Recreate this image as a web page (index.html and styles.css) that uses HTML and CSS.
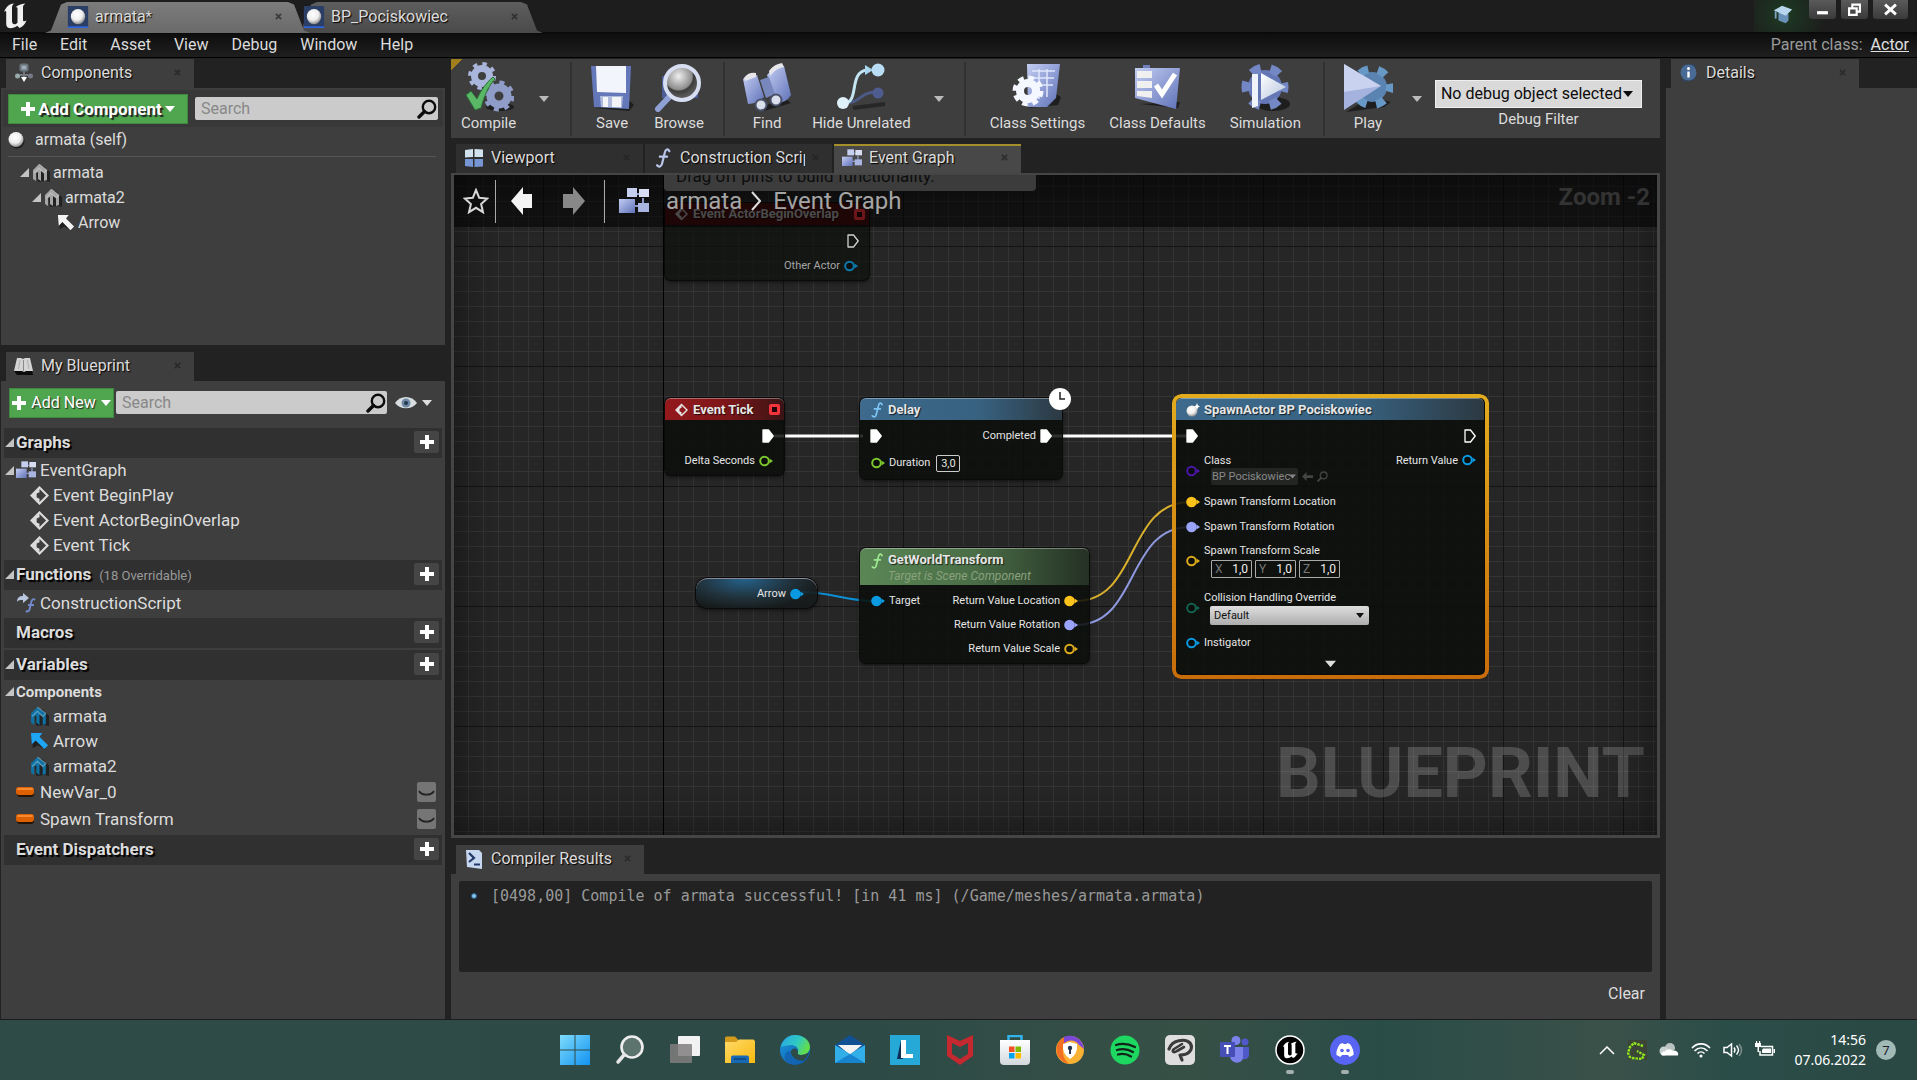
FILE: index.html
```html
<!DOCTYPE html>
<html lang="en">
<head>
<meta charset="utf-8">
<title>armata - Blueprint Editor</title>
<link rel="stylesheet" href="styles.css">
</head>
<body>
<svg class="defs" aria-hidden="true">
  <defs>
    <linearGradient id="blueMetal" x1="0" y1="0" x2="1" y2="1"><stop offset="0" stop-color="#c3cdf2"/><stop offset="1" stop-color="#5f72b8"/></linearGradient>
    <linearGradient id="paleMetal" x1="0" y1="0" x2="1" y2="1"><stop offset="0" stop-color="#ffffff"/><stop offset="1" stop-color="#b4c4de"/></linearGradient>
    <linearGradient id="winBlue" x1="0" y1="0" x2="1" y2="1"><stop offset="0" stop-color="#7fdcfb"/><stop offset="1" stop-color="#1192f2"/></linearGradient>
    <linearGradient id="folderY" x1="0" y1="0" x2="1" y2="1"><stop offset="0" stop-color="#ffd968"/><stop offset="1" stop-color="#f8b90f"/></linearGradient>
    <linearGradient id="edgeG" x1="0" y1="0" x2="1" y2="0.4"><stop offset="0" stop-color="#2aa6e6"/><stop offset="0.6" stop-color="#2fc8c4"/><stop offset="1" stop-color="#62dd4c"/></linearGradient>
    <linearGradient id="edgeB" x1="0" y1="0" x2="1" y2="1"><stop offset="0" stop-color="#1b9be0"/><stop offset="1" stop-color="#0b4fa0"/></linearGradient>
    <linearGradient id="bagG" x1="0" y1="0" x2="0" y2="1"><stop offset="0" stop-color="#ffffff"/><stop offset="1" stop-color="#d2d8dc"/></linearGradient>
    <radialGradient id="egg" cx="0.42" cy="0.35" r="0.65"><stop offset="0" stop-color="#ffffff"/><stop offset="0.6" stop-color="#eeeeee"/><stop offset="1" stop-color="#8d8d8d"/></radialGradient>
    <radialGradient id="lens" cx="0.4" cy="0.3" r="0.8"><stop offset="0" stop-color="#efefef"/><stop offset="0.5" stop-color="#8b8b8b"/><stop offset="0.55" stop-color="#3c3c3c"/><stop offset="1" stop-color="#777777"/></radialGradient>
  </defs>
  <symbol id="x" viewBox="0 0 8 8"><path d="M1 1l6 6M7 1L1 7" stroke="currentColor" stroke-width="2" fill="none"/></symbol>
  <symbol id="caret" viewBox="0 0 10 6"><path d="M0 0h10L5 6z" fill="currentColor"/></symbol>
  <symbol id="plus" viewBox="0 0 14 14"><path d="M5 0h4v5h5v4H9v5H5V9H0V5h5z" fill="currentColor"/></symbol>
  <symbol id="tri" viewBox="0 0 9 9"><path d="M9 0v9H0z" fill="#c4c4c4"/></symbol>
  <symbol id="search" viewBox="0 0 20 20"><circle cx="12" cy="8" r="6.2" fill="none" stroke="currentColor" stroke-width="2.4"/><path d="M7.5 12.5L2 18" stroke="currentColor" stroke-width="3.4" stroke-linecap="round"/></symbol>
  <symbol id="ue" viewBox="0 0 24 26"><path d="M1 9C3 4 6 1 11 0.5 9 2 9 3.5 9 5v13c0 2 1 3.3 2.6 3.3 1.2 0 2.2-.6 2.9-1.5V5.500c0-1.200-.8-1.600-1.800-1.200C14 2.500 17.500 1 22.500 0.500 20.500 1.800 20 2.800 20 4.500V17c0 1.500 1.500 1.600 3.500.4C22 21.500 19 24 16.500 25l-2.200-2.200C12.300 24.300 10 25.300 7.500 25.300 4 25 3.200 23 3.200 20V9.500C3.200 7.500 2.500 7.500 1 9z" fill="currentColor"/></symbol>
  <symbol id="ball" viewBox="0 0 24 26"><rect width="24" height="26" fill="#2b3f66"/><ellipse cx="12" cy="12.500" rx="8.500" ry="9" fill="url(#egg)"/><rect y="24" width="24" height="2" fill="#2d66dd"/></symbol>
  <symbol id="orb" viewBox="0 0 18 18"><ellipse cx="9.500" cy="10" rx="8" ry="8" fill="#1d1d1d"/><circle cx="8.500" cy="8.500" r="8" fill="url(#egg)"/></symbol>
  <symbol id="house" viewBox="0 0 18 18"><path d="M4 6l8-4 6 6v10l-4-1-8 1z" fill="#000" opacity=".45"/><path d="M1 6L7 0l8 6v10l-3 1V9L9 7v10l-3-2V8L4 9v8l-3-2z" fill="currentColor"/><path d="M7 0l8 6-3 3-5-5-5 5" fill="none" stroke="#fff" stroke-opacity=".3" stroke-width="1.200"/></symbol>
  <symbol id="arrowNW" viewBox="0 0 20 20"><path d="M2 3l1 14 5-3 9 5" fill="#000" opacity=".5"/><path d="M1 1h12l-3 4 9 9-4 4-9-9-4 4z" fill="currentColor"/></symbol>
  <symbol id="comps" viewBox="0 0 20 20"><rect x="5.500" y="0.500" width="9" height="8" rx="2" fill="#68737d"/><rect x="7.500" y="2.500" width="5" height="4" fill="#a2abba"/><path d="M10 8v7M4 12h12" stroke="#71777e" stroke-width="2"/><circle cx="3.500" cy="13" r="2.500" fill="#9aa"/><circle cx="16.500" cy="13" r="2.500" fill="#778"/><path d="M7 14h6l-3 5z" fill="#fff"/></symbol>
  <symbol id="book" viewBox="0 0 20 18"><path d="M0 14l3 4h16l-1-5z" fill="#0b0b0b"/><path d="M3 1h4l2 1 2-1h5l3 13h-7l-2 1-2-1H0z" fill="#d4d4d4"/><path d="M9.500 3v11" stroke="#8a8a8a"/><path d="M6 3L4.500 12M13.500 3l1.500 9" stroke="#b0b0b0"/></symbol>
  <symbol id="panes" viewBox="0 0 20 20"><path d="M1 2l8-1v8l-8 .5zM10.500 1L19 1.500V9h-8.500z" fill="#cfe2ee"/><path d="M1 11h8v8l-8-1zM10.500 11H19v7.500l-8.500.5z" fill="#7595d4"/></symbol>
  <symbol id="graph" viewBox="0 0 30 26"><path d="M12 6h8M24 10v8M12 18h8" stroke="#8d99c9" stroke-width="2"/><rect x="8" y="0" width="10" height="9" fill="#c6cfee"/><rect x="20" y="1" width="10" height="8" fill="#d9def5"/><rect x="0" y="11" width="16" height="14" fill="url(#blueMetal)"/><rect x="19" y="15" width="11" height="9" fill="#a9b5e0"/></symbol>
  <symbol id="fn" viewBox="0 0 16 22"><path d="M15 3.500C13.500.5 10.800 1 10 5L7 17c-.8 3.500-3.500 4.500-5.500 2M4.500 9.500h8" fill="none" stroke="currentColor" stroke-width="2.400" stroke-linecap="round"/></symbol>
  <symbol id="construct" viewBox="0 0 20 20"><path d="M1 9c0-5 3-6 6-6V0l6 5-6 5V7C4 7 2 7 1 9z" fill="#b9c6df"/><path d="M19 7c-2-2-3.500 0-4 3l-1.200 5.500c-.5 2.800-2 3.500-4 2.500M12 12h6" fill="none" stroke="#7287c9" stroke-width="2"/></symbol>
  <symbol id="diamond" viewBox="0 0 20 20"><path d="M10 1.500l8.500 8.500-8.500 8.500L1.500 10z" fill="none" stroke="currentColor" stroke-width="2.200"/><path d="M10 2L2 10l8 8v-4.500L7 12V8l3-1.500z" fill="currentColor"/></symbol>
  <symbol id="eye" viewBox="0 0 22 14"><path d="M0 7C5-1 17-1 22 7 17 14 5 14 0 7z" fill="#d8dde0"/><circle cx="11" cy="7" r="4.500" fill="#6f8aa5"/><circle cx="11" cy="7" r="2" fill="#23374c"/></symbol>
  <symbol id="closedEye" viewBox="0 0 20 20"><path d="M2 9c4 5 12 5 16 0" fill="none" stroke="#222" stroke-width="2"/></symbol>
  <symbol id="pill" viewBox="0 0 18 10"><rect x="1" y="2" width="17" height="8" rx="3" fill="#241307"/><rect width="18" height="8" rx="3" fill="#dd6003"/><rect x="1" y="1" width="16" height="2" rx="1" fill="#f58a30"/></symbol>
  <symbol id="info" viewBox="0 0 20 20"><path d="M4 2l12-1v16L4 19z" fill="#31435c"/><circle cx="9.500" cy="9.500" r="8" fill="#4a6a96"/><circle cx="9.500" cy="5.500" r="1.500" fill="#fff"/><path d="M9.500 8.500v6" stroke="#fff" stroke-width="2.400"/></symbol>
  <symbol id="prompt" viewBox="0 0 18 20"><path d="M1 1h13l3 3v16L2 18z" fill="#c8d7f0"/><path d="M4 4l5 5-5 4" fill="none" stroke="#223866" stroke-width="2.200"/><path d="M9 15.500h6" stroke="#223866" stroke-width="2"/></symbol>
  <symbol id="star" viewBox="0 0 26 26"><path d="M13 2l3.200 7.800 8 .7-6.100 5.500 1.900 8.200-7-4.400-7 4.400L7.900 16 1.800 10.500l8-.7z" fill="none" stroke="#d8d8d8" stroke-width="2"/></symbol>
  <symbol id="back" viewBox="0 0 22 28"><path d="M12 0v7h9v14h-9v7L0 14z" fill="currentColor"/></symbol>
  <symbol id="fwd" viewBox="0 0 22 28"><path d="M10 0v7H0v14h10v7l12-14z" fill="currentColor"/></symbol>
  <symbol id="exec" viewBox="0 0 12 14"><path d="M1 1h5.500L11.200 7 6.500 13H1z" fill="var(--fill,none)" stroke="#fff" stroke-width="1.300" stroke-linejoin="round"/></symbol>
  <symbol id="pin" viewBox="0 0 14 12"><circle cx="5.500" cy="6" r="4.300" fill="var(--fill,#0b0e0b)" stroke="currentColor" stroke-width="2"/><path d="M10.500 3.500L14 6l-3.500 2.500z" fill="currentColor"/></symbol>
  <symbol id="compile" viewBox="0 0 50 50">
    <ellipse cx="36" cy="45" rx="14" ry="4" fill="#111" opacity=".7"/>
    <circle cx="18" cy="14" r="7.500" fill="none" stroke="#a9b5da" stroke-width="7"/><circle cx="18" cy="14" r="12" fill="none" stroke="#a9b5da" stroke-width="4" stroke-dasharray="4.400 5.020"/>
    <circle cx="35" cy="34" r="8.500" fill="none" stroke="#8f9cc8" stroke-width="8"/><circle cx="35" cy="34" r="13.500" fill="none" stroke="#8f9cc8" stroke-width="4" stroke-dasharray="5 5.600"/>
    <path d="M2 33l5-4 6 8c4-9 9-16 16-22l2 2c-7 8-11 17-14 29l-6 2z" fill="#59b766" stroke="#2c6f38" stroke-width="1"/>
  </symbol>
  <symbol id="save" viewBox="0 0 50 50"><path d="M8 46l34 3 5-6-4-4z" fill="#111" opacity=".7"/><path d="M4 4h40l-2 43L7 45z" fill="#6377b9"/><path d="M9 4h30v27l-29-1z" fill="#f3f5fc"/><path d="M13 34h23l-1 12-21-1z" fill="#aebbdc"/><path d="M16 35h5v10h-5zM25 35h9v10h-9z" fill="#f2f4f8"/></symbol>
  <symbol id="browse" viewBox="0 0 50 50"><path d="M8 14h36v22H8z" fill="#4b5c97"/><path d="M4 47l14-15" stroke="#8fa0d4" stroke-width="6" stroke-linecap="round"/><circle cx="28" cy="21" r="17" fill="url(#lens)" stroke="#d7def2" stroke-width="4"/></symbol>
  <symbol id="find" viewBox="0 0 50 50"><path d="M14 46l30-9 5 4-27 8z" fill="#111" opacity=".7"/><path d="M1 17q7-6 14-4l7 22q-7 7-16 7z" fill="url(#blueMetal)"/><path d="M25 13q7-9 17-9l7 29q-5 8-14 8z" fill="url(#blueMetal)"/><path d="M18 18l9-3 6 17-9 4z" fill="#7888bd"/><path d="M2 16q4-6 12-5v4L3 19zM27 9q5-7 13-8l2 4q-8 1-14 9z" fill="#e6e6ea"/><circle cx="19" cy="43" r="5.500" fill="#d9dfeb" stroke="#4a5068" stroke-width="2"/><circle cx="34" cy="38" r="5.500" fill="#d9dfeb" stroke="#4a5068" stroke-width="2"/></symbol>
  <symbol id="hide" viewBox="0 0 50 50"><path d="M17 46l32-4" stroke="#111" stroke-width="4" opacity=".5"/><path d="M8 41c18 0 14-10 31-11" fill="none" stroke="#4d5a85" stroke-width="3"/><circle cx="42" cy="31" r="5.500" fill="#4f5c90"/><path d="M8 41C24 41 12 10 31 8" fill="none" stroke="#c3e5f2" stroke-width="3"/><path d="M29 3l8 5-8 5z" fill="#a9d7f0"/><circle cx="42" cy="8" r="6.500" fill="#b8ddf5"/><circle cx="7" cy="41" r="6" fill="#dff1fa"/></symbol>
  <symbol id="settings" viewBox="0 0 50 50"><path d="M16 46l30-3 3-8-7-4z" fill="#111" opacity=".7"/><path d="M15 2h33l-4 34-9 9H16z" fill="url(#blueMetal)"/><path d="M20 9h23M20 16h22M20 23h21M27 7v30M35 7v28" stroke="#dfe7fa" stroke-width="1.500"/><circle cx="16" cy="29" r="8" fill="none" stroke="#f4f7ff" stroke-width="8"/><circle cx="16" cy="29" r="13" fill="none" stroke="#f4f7ff" stroke-width="5" stroke-dasharray="5.600 4.610"/></symbol>
  <symbol id="defaults" viewBox="0 0 50 50"><path d="M8 42l38 4 2-6z" fill="#111" opacity=".7"/><path d="M11 3h7v5h-7z" fill="#7080bd"/><path d="M3 6h45l-4 41L3 36z" fill="url(#blueMetal)"/><path d="M5 9h15v7H5zM5 19h15v7H5zM5 29h15v7l-15-2z" fill="#f0f0f0"/><path d="M24 23l6 9 13-20" fill="none" stroke="#fff" stroke-width="5"/></symbol>
  <symbol id="simulate" viewBox="0 0 50 50"><ellipse cx="33" cy="42" rx="17" ry="7" fill="#111" opacity=".7"/><circle cx="25" cy="25" r="17" fill="#6477b4"/><circle cx="25" cy="25" r="19" fill="none" stroke="#7387c4" stroke-width="9" stroke-dasharray="9.900 10" stroke-dashoffset="5"/><path d="M12 12h6v32l-6 2z" fill="#eff4fb"/><path d="M21 11l25 14-25 13z" fill="url(#paleMetal)"/></symbol>
  <symbol id="play" viewBox="0 0 50 50"><path d="M3 50l38-5 7-5-20-5z" fill="#111" opacity=".7"/><circle cx="29" cy="25" r="15" fill="#5b83b2"/><circle cx="29" cy="25" r="18" fill="none" stroke="#6798c6" stroke-width="8" stroke-dasharray="9 9.850" stroke-dashoffset="4"/><path d="M1 2l37 22L1 48z" fill="#a5b2de"/><path d="M1 2l37 22L1 30z" fill="#d2d9f1" opacity=".8"/></symbol>
</svg>

<header class="titlebar">
  <svg class="logo"><use href="#ue"/></svg>
  <nav class="doc-tabs" aria-label="Open assets">
    <div class="doc-tab doc-tab-active"><svg><use href="#ball"/></svg><span>armata<small>*</small></span><button class="close" aria-label="Close"><svg><use href="#x"/></svg></button></div>
    <div class="doc-tab"><svg><use href="#ball"/></svg><span>BP_Pociskowiec</span><button class="close" aria-label="Close"><svg><use href="#x"/></svg></button></div>
  </nav>
  <div class="window-tools">
    <svg class="cap" viewBox="0 0 24 22"><path d="M7 9v9l8 3 3-3v-7z" fill="#6a91b8"/><path d="M2 7l9-5 11 4-7 7z" fill="#b7d6ee"/><path d="M4 8v8" stroke="#7fa4c8" stroke-width="2"/></svg>
    <button class="win-btn" aria-label="Minimize"><svg viewBox="0 0 12 12"><path d="M1 9h10" stroke="#fff" stroke-width="3"/></svg></button>
    <button class="win-btn" aria-label="Restore"><svg viewBox="0 0 12 12"><path d="M4 4V1.500h7V8H8.500M1 5h7v6H1z" fill="none" stroke="#fff" stroke-width="2"/></svg></button>
    <button class="win-btn win-close" aria-label="Close window"><svg viewBox="0 0 12 12"><path d="M1 1.500l10 9M11 1.500l-10 9" stroke="#fff" stroke-width="2.600"/></svg></button>
  </div>
</header>

<nav class="menubar" aria-label="Main menu">
  <button>File</button><button>Edit</button><button>Asset</button><button>View</button><button>Debug</button><button>Window</button><button>Help</button>
  <p>Parent class: <a href="#">Actor</a></p>
</nav>

<main class="workspace">
  <aside class="sidebar">
    <section class="dock dock-components">
      <div class="tab"><svg><use href="#comps"/></svg><h2>Components</h2><button class="close" aria-label="Close"><svg><use href="#x"/></svg></button></div>
      <div class="panel">
        <div class="tool-row tool-row-dark">
          <button class="green green-bold"><svg class="plus"><use href="#plus"/></svg>Add Component<svg class="caret"><use href="#caret"/></svg></button>
          <label class="search"><input type="text" placeholder="Search" aria-label="Search components"><svg><use href="#search"/></svg></label>
        </div>
        <div class="self"><svg><use href="#orb"/></svg>armata (self)</div>
        <ul class="tree">
          <li class="lvl1"><svg class="tri"><use href="#tri"/></svg><svg class="ico gray"><use href="#house"/></svg>armata</li>
          <li class="lvl2"><svg class="tri"><use href="#tri"/></svg><svg class="ico gray"><use href="#house"/></svg>armata2</li>
          <li class="lvl3"><svg class="ico white"><use href="#arrowNW"/></svg>Arrow</li>
        </ul>
      </div>
    </section>

    <section class="dock dock-blueprint">
      <div class="tab"><svg><use href="#book"/></svg><h2>My Blueprint</h2><button class="close" aria-label="Close"><svg><use href="#x"/></svg></button></div>
      <div class="panel">
        <div class="tool-row">
          <button class="green"><svg class="plus"><use href="#plus"/></svg>Add New<svg class="caret"><use href="#caret"/></svg></button>
          <label class="search"><input type="text" placeholder="Search" aria-label="Search blueprint"><svg><use href="#search"/></svg></label>
          <button class="view-options" aria-label="View options"><svg class="eye"><use href="#eye"/></svg><svg class="caret"><use href="#caret"/></svg></button>
        </div>
        <div class="outline">
          <div class="group"><svg class="tri"><use href="#tri"/></svg><h3>Graphs</h3><button aria-label="Add graph"><svg><use href="#plus"/></svg></button></div>
          <div class="item item-parent"><svg class="tri"><use href="#tri"/></svg><svg class="ico"><use href="#graph"/></svg>EventGraph</div>
          <div class="item item-child"><svg class="ico"><use href="#diamond"/></svg>Event BeginPlay</div>
          <div class="item item-child"><svg class="ico"><use href="#diamond"/></svg>Event ActorBeginOverlap</div>
          <div class="item item-child"><svg class="ico"><use href="#diamond"/></svg>Event Tick</div>
          <div class="group group-gap"><svg class="tri"><use href="#tri"/></svg><h3>Functions</h3><small>(18 Overridable)</small><button aria-label="Add function"><svg><use href="#plus"/></svg></button></div>
          <div class="item item-tall"><svg class="ico"><use href="#construct"/></svg>ConstructionScript</div>
          <div class="group"><h3>Macros</h3><button aria-label="Add macro"><svg><use href="#plus"/></svg></button></div>
          <div class="group group-gap"><svg class="tri"><use href="#tri"/></svg><h3>Variables</h3><button aria-label="Add variable"><svg><use href="#plus"/></svg></button></div>
          <div class="item item-head"><svg class="tri"><use href="#tri"/></svg>Components</div>
          <div class="item item-child"><svg class="ico teal"><use href="#house"/></svg>armata</div>
          <div class="item item-child"><svg class="ico sky"><use href="#arrowNW"/></svg>Arrow</div>
          <div class="item item-child"><svg class="ico teal"><use href="#house"/></svg>armata2</div>
          <div class="item item-var"><svg class="pill"><use href="#pill"/></svg>NewVar_0<button aria-label="Toggle visibility"><svg><use href="#closedEye"/></svg></button></div>
          <div class="item item-var"><svg class="pill"><use href="#pill"/></svg>Spawn Transform<button aria-label="Toggle visibility"><svg><use href="#closedEye"/></svg></button></div>
          <div class="group group-gap"><h3>Event Dispatchers</h3><button aria-label="Add dispatcher"><svg><use href="#plus"/></svg></button></div>
        </div>
      </div>
    </section>
  </aside>

  <section class="center">
    <div class="toolbar">
      <div class="tool-group tg-compile"><button class="tool"><svg><use href="#compile"/></svg>Compile</button><button class="drop" aria-label="Compile options"><svg><use href="#caret"/></svg></button></div>
      <div class="tool-group tg-file"><button class="tool"><svg><use href="#save"/></svg>Save</button><button class="tool"><svg><use href="#browse"/></svg>Browse</button></div>
      <div class="tool-group tg-find"><button class="tool"><svg><use href="#find"/></svg>Find</button><button class="tool"><svg><use href="#hide"/></svg>Hide Unrelated</button><button class="drop" aria-label="Hide options"><svg><use href="#caret"/></svg></button></div>
      <div class="tool-group tg-class"><button class="tool"><svg><use href="#settings"/></svg>Class Settings</button><button class="tool"><svg><use href="#defaults"/></svg>Class Defaults</button><button class="tool"><svg><use href="#simulate"/></svg>Simulation</button></div>
      <div class="tool-group tg-play"><button class="tool"><svg><use href="#play"/></svg>Play</button><button class="drop" aria-label="Play options"><svg><use href="#caret"/></svg></button></div>
      <div class="debug"><div class="debug-pick"><select id="debug-filter"><option>No debug object selected</option></select><svg><use href="#caret"/></svg></div><label for="debug-filter">Debug Filter</label></div>
    </div>

    <div class="editor-tabs">
      <div class="tab"><svg><use href="#panes"/></svg><h2>Viewport</h2><button class="close" aria-label="Close"><svg><use href="#x"/></svg></button></div>
      <div class="tab tab-fn"><svg><use href="#fn"/></svg><h2>Construction Script</h2><button class="close" aria-label="Close"><svg><use href="#x"/></svg></button></div>
      <div class="tab tab-on"><svg><use href="#graph"/></svg><h2>Event Graph</h2><button class="close" aria-label="Close"><svg><use href="#x"/></svg></button></div>
    </div>

    <div class="canvas">
      <div class="watermark">BLUEPRINT</div>
      <svg class="wires" aria-hidden="true">
        <g fill="none">
          <path d="M320 261H409M590 261H736" stroke="#fff" stroke-width="3"/>
          <path d="M348 417C376 417 392 426 420 426" stroke="#0a8fd6" stroke-width="2"/>
          <path d="M622 426C685 426 672 327 736 327" stroke="#d9b12c" stroke-width="2"/>
          <path d="M622 450C685 450 672 352 736 352" stroke="#8e99e0" stroke-width="2"/>
        </g>
      </svg>

      <article class="node node-overlap">
        <header class="node-head red"><svg class="dia"><use href="#diamond"/></svg><h4>Event ActorBeginOverlap</h4><i class="square"></i></header>
        <div class="row end exec-row"><svg class="exec"><use href="#exec"/></svg></div>
        <div class="row end">Other Actor<svg class="pin blue"><use href="#pin"/></svg></div>
      </article>

      <article class="node node-tick">
        <header class="node-head red"><svg class="dia"><use href="#diamond"/></svg><h4>Event Tick</h4><i class="square"></i></header>
        <div class="row end exec-row"><svg class="exec full"><use href="#exec"/></svg></div>
        <div class="row end">Delta Seconds<svg class="pin green-pin"><use href="#pin"/></svg></div>
      </article>

      <article class="node node-delay">
        <header class="node-head blue-head"><svg class="fn"><use href="#fn"/></svg><h4>Delay</h4></header>
        <svg class="clock" viewBox="0 0 22 22"><circle cx="11" cy="11" r="11" fill="#fff"/><path d="M11 4v7h5" fill="none" stroke="#222" stroke-width="1.500"/></svg>
        <div class="row exec-row"><svg class="exec full"><use href="#exec"/></svg><span class="push">Completed</span><svg class="exec full"><use href="#exec"/></svg></div>
        <div class="row row-28"><svg class="pin green-pin"><use href="#pin"/></svg><label for="duration">Duration</label><input class="num" id="duration" type="text" value="3,0"></div>
      </article>

      <article class="node node-arrow"><span>Arrow</span><svg class="pin blue solid"><use href="#pin"/></svg></article>

      <article class="node node-world">
        <header class="node-head green-head"><svg class="fn"><use href="#fn"/></svg><div><h4>GetWorldTransform</h4><em>Target is Scene Component</em></div></header>
        <div class="row first"><svg class="pin blue solid"><use href="#pin"/></svg>Target<span class="push">Return Value Location</span><svg class="pin gold solid"><use href="#pin"/></svg></div>
        <div class="row end">Return Value Rotation<svg class="pin lilac solid"><use href="#pin"/></svg></div>
        <div class="row end">Return Value Scale<svg class="pin gold"><use href="#pin"/></svg></div>
      </article>

      <article class="node node-spawn">
        <header class="node-head blue-head"><svg class="spawn" viewBox="0 0 14 14"><circle cx="6" cy="8" r="5.500" fill="url(#egg)"/><path d="M11 0l1 2.500 2 1-2 1L11 7l-1-2.500-2-1 2-1z" fill="#fff"/></svg><h4>SpawnActor BP Pociskowiec</h4></header>
        <div class="row exec-row"><svg class="exec full"><use href="#exec"/></svg><svg class="exec push"><use href="#exec"/></svg></div>
        <div class="row row-top">
          <svg class="pin violet mid"><use href="#pin"/></svg>
          <div class="field"><label for="class">Class</label><div class="class-pick"><div class="ghost"><select id="class"><option>BP Pociskowiec</option></select><svg><use href="#caret"/></svg></div><button aria-label="Use selected"><svg viewBox="0 0 12 10"><path d="M0 5l5-5v3.500h7v3H5V10z" fill="currentColor"/></svg></button><button aria-label="Browse to asset"><svg><use href="#search"/></svg></button></div></div>
          <span class="push">Return Value</span><svg class="pin blue"><use href="#pin"/></svg>
        </div>
        <div class="row"><svg class="pin gold solid"><use href="#pin"/></svg>Spawn Transform Location</div>
        <div class="row row-rotation"><svg class="pin lilac solid"><use href="#pin"/></svg>Spawn Transform Rotation</div>
        <div class="row row-top row-scale">
          <svg class="pin gold mid"><use href="#pin"/></svg>
          <div class="field"><span>Spawn Transform Scale</span><div class="vec"><label>X<input type="text" value="1,0"></label><label>Y<input type="text" value="1,0"></label><label>Z<input type="text" value="1,0"></label></div></div>
        </div>
        <div class="row row-top row-collide">
          <svg class="pin jade mid"><use href="#pin"/></svg>
          <div class="field"><label for="collide">Collision Handling Override</label><div class="pick"><select id="collide"><option>Default</option></select><svg><use href="#caret"/></svg></div></div>
        </div>
        <div class="row"><svg class="pin blue"><use href="#pin"/></svg>Instigator</div>
        <button class="expand" aria-label="Show advanced"><svg><use href="#caret"/></svg></button>
      </article>

      <div class="hint"><span>Drag off pins to build functionality.</span></div>
      <div class="crumbs">
        <button aria-label="Favorite"><svg class="star"><use href="#star"/></svg></button>
        <hr>
        <button aria-label="Back"><svg class="nav-arrow white"><use href="#back"/></svg></button>
        <button aria-label="Forward"><svg class="nav-arrow dim"><use href="#fwd"/></svg></button>
        <hr>
        <svg class="crumb-graph"><use href="#graph"/></svg>
        <span>armata</span><svg class="chev" viewBox="0 0 10 20"><path d="M1 1l8 9-8 9" fill="none" stroke="#ddd" stroke-width="2"/></svg><span>Event Graph</span>
        <strong>Zoom -2</strong>
      </div>
    </div>

    <section class="results">
      <div class="tab"><svg><use href="#prompt"/></svg><h2>Compiler Results</h2><button class="close" aria-label="Close"><svg><use href="#x"/></svg></button></div>
      <div class="results-body">
        <div class="log"><i></i><code>[0498,00] Compile of armata successful! [in 41 ms] (/Game/meshes/armata.armata)</code></div>
        <button class="clear">Clear</button>
      </div>
    </section>
  </section>

  <aside class="details">
    <div class="tab"><svg><use href="#info"/></svg><h2>Details</h2><button class="close" aria-label="Close"><svg><use href="#x"/></svg></button></div>
    <div class="panel"></div>
  </aside>
</main>

<footer class="taskbar">
  <nav class="apps" aria-label="Taskbar">
    <button aria-label="Start"><svg viewBox="0 0 30 30"><path d="M0 0h14.500v14.500H0zM15.500 0H30v14.500H15.500zM0 15.500h14.500V30H0zM15.500 15.500H30V30H15.500z" fill="url(#winBlue)"/></svg></button>
    <button aria-label="Search"><svg viewBox="0 0 30 30"><circle cx="17" cy="12" r="10.500" fill="#5c736e" stroke="#eee" stroke-width="2.600"/><path d="M9 20l-6 7" stroke="#e6e6e6" stroke-width="3.500" stroke-linecap="round"/></svg></button>
    <button aria-label="Task view"><svg viewBox="0 0 30 30"><rect x="8" y="1" width="22" height="20" rx="1" fill="#f2f2f2"/><rect x="0" y="9" width="22" height="19" rx="1" fill="#807e7e" opacity=".85"/></svg></button>
    <button aria-label="File Explorer"><svg viewBox="0 0 30 30"><path d="M0 3q0-1.500 1.500-1.500H10l3 3V8H0z" fill="#d49a1b"/><path d="M0 7h11l3-2.500h14.500L30 6v22H0z" fill="url(#folderY)"/><path d="M6 28v-5.500q0-2 2-2h14q2 0 2 2V28z" fill="#1769b5"/><path d="M9 24h12" stroke="#0c447c" stroke-width="1.500"/></svg></button>
    <button aria-label="Edge"><svg viewBox="0 0 30 30"><circle cx="15" cy="15" r="15" fill="url(#edgeB)"/><path d="M1 12C3 4 9 0 15 0c9 0 15 6 15 12 0 5-4 8-9 8-3 0-4-1-3-3 1-3-1-6-6-7-4 0-8 1-11 2z" fill="url(#edgeG)"/><path d="M18 17c-1 2 0 3 3 3 3 0 6-1 8-3-1 4-3 7-6 9-8 0-13-6-12-10 1-3 6-4 7 1z" fill="#2f4b47"/><path d="M11 16c-1 6 5 11 13 9.500C20 30 11 31 6 26c-3-5 0-10 5-10z" fill="#1464b4"/></svg></button>
    <button aria-label="Mail"><svg viewBox="0 0 30 30"><path d="M0 10L15 0l15 10v6H0z" fill="#0f5193"/><path d="M3 10h24L15 20z" fill="#f3f3f3"/><path d="M0 10l15 9 15-9v18H0z" fill="#32aee8"/><path d="M15 19l15 9H0z" fill="#1784cf"/></svg></button>
    <button aria-label="L"><svg viewBox="0 0 30 30"><path d="M0 0h30v30H0z" fill="#26a9d6"/><path d="M11 5L7 24h6z" fill="#0b2f56"/><path d="M11 5h5v14h7v4H11z" fill="#fff"/></svg></button>
    <button aria-label="McAfee"><svg viewBox="0 0 30 30"><path d="M2 0l13 6 13-6v21l-13 9-13-9zM7 8v11l8 5 8-5V8l-8 4z" fill="#c5282f" fill-rule="evenodd"/></svg></button>
    <button aria-label="Store"><svg viewBox="0 0 30 30"><path d="M8.500 6V1h13v5" fill="none" stroke="#32b4ea" stroke-width="2.500"/><path d="M0 5h30v21q0 4-4 4H4q-4 0-4-4z" fill="url(#bagG)"/><path d="M9 11.500h5.500V17H9z" fill="#f25022"/><path d="M15.500 11.500H21V17h-5.500z" fill="#7fba00"/><path d="M9 18h5.500v5.500H9z" fill="#00a4ef"/><path d="M15.500 18H21v5.500h-5.500z" fill="#ffb900"/></svg></button>
    <button aria-label="Secure Browser"><svg viewBox="0 0 30 30"><circle cx="15" cy="15" r="14" fill="#f9b233"/><path d="M10 2C1 6-1 17 5 24c3 3 6 4 9 5C6 22 6 12 12 6z" fill="#f36f24"/><path d="M9 2c10-4 19 3 20 12l-5-4C20 4 13 5 9 8z" fill="#7b48d8"/><path d="M8 9l7-2 7 2q1 10-7 15Q7 19 8 9z" fill="#fff"/><circle cx="15" cy="13" r="2.200" fill="#26324d"/><path d="M14 14h2v5h-2z" fill="#26324d"/></svg></button>
    <button aria-label="Spotify"><svg viewBox="0 0 30 30"><circle cx="15" cy="15" r="14.500" fill="#1ed760"/><path d="M6 10c6-2 13-1 19 2M7 15c5-1.500 11-1 16 2M8 19.500c4-1 9-.5 13 2" fill="none" stroke="#10241a" stroke-width="2.300" stroke-linecap="round"/></svg></button>
    <button aria-label="Clip Studio"><svg viewBox="0 0 30 30"><rect width="30" height="30" rx="5" fill="#dedede"/><path d="M4 14C7 5 20 3 25 8c4 6-1 12-10 12l2 5" fill="none" stroke="#3b3b3b" stroke-width="3.200" stroke-linecap="round" stroke-linejoin="round"/><path d="M17 9l-8 5c-3 3 0 4 3 2l7-4" fill="none" stroke="#3b3b3b" stroke-width="2.600" stroke-linecap="round" stroke-linejoin="round"/></svg></button>
    <button aria-label="Teams"><svg viewBox="0 0 30 30"><circle cx="16" cy="5.500" r="4.500" fill="#7b83eb"/><circle cx="25" cy="7" r="3.500" fill="#5059c9"/><path d="M20 12h9v9q-2 4-6 3z" fill="#5059c9"/><path d="M10 12h13v10c0 7-11 8-13 0z" fill="#7b83eb"/><rect x="0" y="7" width="15" height="15" rx="1" fill="#464eb8"/><path d="M4 11h7M7.500 11v8" stroke="#fff" stroke-width="2"/></svg></button>
    <button class="running" aria-label="Unreal Engine"><svg viewBox="0 0 30 30"><circle cx="15" cy="15" r="14" fill="#000" stroke="#fff" stroke-width="1.500"/><use class="ue-mini" href="#ue" x="7" y="6" width="16" height="18"/></svg></button>
    <button class="running" aria-label="Discord"><svg viewBox="0 0 30 30"><circle cx="15" cy="15" r="15" fill="#5865f2"/><path d="M10 9l3-1 .5 1h3l.5-1 3 1c3 4 4 8 3.500 11l-4 2-1.500-2h-6l-1.500 2-4-2C6 17 7 13 10 9z" fill="#fff"/><circle cx="12" cy="15.500" r="1.800" fill="#5865f2"/><circle cx="18" cy="15.500" r="1.800" fill="#5865f2"/></svg></button>
  </nav>
  <div class="tray">
    <svg class="t-chev" viewBox="0 0 16 9"><path d="M1 8l7-7 7 7" fill="none" stroke="#fff" stroke-width="1.500"/></svg>
    <svg class="t-ico" viewBox="0 0 20 20"><path d="M1 0h19v20H1z" fill="#3a4437"/><path d="M16 6L7 3 3 7 1 13l3 6M5 18l10 1 2-4-7-4" fill="none" stroke="#8fe51e" stroke-width="2.400" stroke-dasharray="2.500 1"/></svg>
    <svg class="t-ico" viewBox="0 0 20 20"><circle cx="11" cy="8" r="5" fill="#b9c2c0"/><circle cx="5" cy="11" r="4.500" fill="#c9d1d0"/><path d="M3 15.500c-1.500-2 0-4 3-4 2-3 6-3 8-.5 3-1 6 1 5 4.500z" fill="#fff"/></svg>
    <svg class="t-ico" viewBox="0 0 20 20"><path d="M1 8c5-5.500 13-5.500 18 0M3.500 11c4-4 9-4 13 0M6.500 13.500c2-2 5-2 7 0" fill="none" stroke="#fff" stroke-width="1.600"/><circle cx="10" cy="16" r="1.500" fill="#fff"/></svg>
    <svg class="t-ico" viewBox="0 0 20 20"><path d="M1 7.500h3L8.500 4v12L4 12.500H1z" fill="none" stroke="#fff" stroke-width="1.500"/><path d="M11 7.500q2 2.500 0 5M13.500 5.500q4 4.500 0 9" fill="none" stroke="#fff" stroke-width="1.400"/><path d="M16 4q5 6 0 12" fill="none" stroke="#80918e" stroke-width="1.400"/></svg>
    <svg class="t-ico" viewBox="0 0 20 20"><path d="M6 6.500h11.500v8.500H5v-4" fill="none" stroke="#fff" stroke-width="1.500"/><path d="M8 8.500h8v4.500H7v-3z" fill="#fff"/><path d="M18.500 9h1.500v4h-1.500zM0 3h6v4H4v5H2.500V7H0zM1 1h1.200v3H1zM4 1h1.200v3H4z" fill="#fff"/></svg>
    <time>14:56<br>07.06.2022</time>
    <b>7</b>
  </div>
</footer>
</body>
</html>
```
FILE: styles.css
```css
* { box-sizing: border-box; }

body {
  margin: 0;
  min-height: 100vh;
  display: flex;
  flex-direction: column;
  background: #222;
  color: #dcdcdc;
  font: 16px/20px Roboto, "Liberation Sans", sans-serif;
}

button, input, select { font: inherit; color: inherit; border: 0; border-radius: 0; padding: 0; margin: 0; background: none; }
select { appearance: none; }
h2, h3, h4, p, ul { margin: 0; padding: 0; font: inherit; list-style: none; }
svg { display: block; flex: none; }
.defs { position: absolute; width: 0; height: 0; }

/* Title bar */
.titlebar { display: flex; height: 34px; background: #1d1d1d; border-bottom: 2px solid #0a0a0a; }
.logo { width: 24px; height: 26px; margin: 3px 18px 0 3px; color: #f0f0f0; }
.doc-tabs { display: flex; padding-top: 2px; isolation: isolate; }
.doc-tab {
  position: relative; display: flex; align-items: center; width: 248px; height: 31px; margin-left: -15px; padding: 0 24px 2px 8px; gap: 6px;
  text-shadow: 1px 1px 1px #000;
}
.doc-tab::before {
  content: ""; position: absolute; inset: 0; z-index: -2; background: linear-gradient(#5e5e5e, #4a4a4a);
  clip-path: polygon(0 100%, 6px 92%, 16px 8%, 22px 0, calc(100% - 22px) 0, calc(100% - 16px) 8%, calc(100% - 6px) 92%, 100% 100%);
}
.doc-tab > svg { width: 22px; height: 22px; }
.doc-tab > span { flex: 1; }
.doc-tab small { font-size: 14px; line-height: 14px; }
.doc-tab-active { width: 265px; margin-left: 0; padding-left: 22px; padding-right: 27px; }
.doc-tab-active::before { z-index: -1; background: linear-gradient(#7c7c7c, #6a6a6a); }
.close { width: 8px; color: #222; opacity: .7; }
.close svg { width: 7px; height: 7px; }
.window-tools { display: flex; margin-left: auto; padding: 0 9px 0 18px; gap: 5px; background: radial-gradient(circle at 30px 14px, #1d3a22, #1d1d1d 42px); }
.cap { width: 22px; height: 22px; margin: 3px 10px 0 0; }
.win-btn { width: 27px; height: 19px; display: grid; place-items: center; background: linear-gradient(#5a5a5a, #3a3a3a); border-radius: 0 0 3px 3px; }
.win-btn svg { width: 13px; height: 13px; }
.win-close { width: 35px; }

/* Menu */
.menubar { display: flex; align-items: center; height: 24px; padding: 0 8px 2px 12px; gap: 23px; background: linear-gradient(#0e0e0e, #1f1f1f); border-bottom: 1px solid #000; }
.menubar p { margin-left: auto; color: #9a9a9a; }
.menubar a { color: #e0e0e0; margin-left: 4px; }

/* Work area */
.workspace { flex: 1; display: grid; grid-template-columns: 445px minmax(0, 1fr) 251px; gap: 6px; padding-top: 1px; border-bottom: 1px solid #1b1b1b; }
.sidebar { display: flex; flex-direction: column; gap: 7px; padding-left: 1px; }
.dock { display: flex; flex-direction: column; }
.dock-components { height: 286px; }
.dock-blueprint { flex: 1; }
.panel { flex: 1; background: #3e3e3e; }

.tab {
  display: flex; align-items: center; width: 188px; height: 29px; padding: 0 12px 2px 8px; margin-left: 5px; gap: 7px;
  background: #3e3e3e; text-shadow: 1px 1px 1px #000;
}
.tab > svg { width: 20px; height: 20px; }
.tab h2 { flex: 1; overflow: hidden; white-space: nowrap; }

.tool-row { display: flex; align-items: center; gap: 2px; height: 47px; padding: 0 13px 4px 8px; }
.tool-row-dark { height: 39px; gap: 7px; padding: 0 5px 0 7px; background: #383838; margin: 0 2px; border-top: 2px solid #3e3e3e; }
.green { display: flex; align-items: center; justify-content: center; gap: 5px; width: 105px; height: 30px; background: #4fa64f; border: 1px solid #3f8a3f; color: #fff; text-shadow: 1px 1px 1px #222; }
.green-bold { width: 180px; gap: 3px; font-size: 17px; font-weight: 700; text-shadow: 2px 2px 1px #222; margin-left: -2px; }
.plus { width: 14px; height: 14px; }
.caret { width: 10px; height: 6px; }
.search { flex: 1; display: flex; align-items: center; height: 23px; padding: 0 1px 0 6px; background: #cbcbcb; border-radius: 2px; color: #0c0c0c; }
.search input { flex: 1; min-width: 0; outline: 0; }
.search input::placeholder { color: #888; opacity: 1; }
.search svg { width: 20px; height: 20px; }
.view-options { display: flex; align-items: center; gap: 5px; margin-left: 6px; color: #ddd; }
.eye { width: 22px; height: 14px; }

.self { display: flex; align-items: center; gap: 10px; height: 30px; margin: 0 9px 3px 7px; border-bottom: 1px solid #555; padding-bottom: 3px; }
.self svg { width: 17px; height: 18px; }
.tree li { display: flex; align-items: center; height: 25px; gap: 3px; }
.lvl1 { padding-left: 19px; }
.lvl2 { padding-left: 31px; }
.lvl3 { padding-left: 56px; }
.tri { width: 9px; height: 9px; }
.ico { width: 18px; height: 18px; }
.gray { color: #a5a5a5; }
.white { color: #f4f4f4; }
.teal { color: #0f71a3; }
.sky { color: #1ea6f5; }

.outline { padding: 0 3px; font-size: 17px; }
.group { display: flex; align-items: center; height: 30px; padding: 0 3px 2px 12px; background: #303030; text-shadow: 2px 2px 1px #000; font-weight: 700; }
.group .tri { margin-left: -11px; margin-right: 2px; }
.group-gap { margin-top: 2px; }
.group small { font-size: 13px; font-weight: 400; color: #999; margin-left: 8px; text-shadow: none; padding-top: 3px; }
.group button { margin-left: auto; width: 25px; height: 22px; display: grid; place-items: center; background: #454545; border-radius: 2px; color: #fff; }
.group button svg { width: 14px; height: 14px; }
.item { display: flex; align-items: center; height: 25px; gap: 5px; padding: 0 0 1px 12px; }
.item-parent { padding-left: 1px; gap: 4px; }
.item-parent .ico { width: 20px; margin-left: -2px; }
.item-child { padding-left: 26px; }
.item-child .ico { width: 19px; height: 19px; margin-right: -1px; }
.item-tall { height: 28px; padding-bottom: 2px; }
.item-tall .ico { width: 20px; height: 20px; margin-right: -1px; }
.item-head { height: 24px; padding-left: 1px; gap: 2px; font-size: 15px; font-weight: 700; }
.item-var { height: 27px; padding-right: 6px; gap: 6px; }
.item-var button { margin-left: auto; width: 19px; height: 20px; background: #757575; border-radius: 2px; }
.item-var button svg { width: 19px; height: 20px; }
.pill { width: 18px; height: 10px; }

/* Center column */
.center { display: flex; flex-direction: column; min-width: 0; }
.toolbar {
  display: flex; height: 79px; font-size: 15px; background: linear-gradient(135deg, #a07f1c 8px, transparent 8px), #3e3e3e;
  text-shadow: 1px 1px 1px #000;
}
.tool-group { display: flex; align-items: stretch; border-right: 2px solid #303030; margin: 3px 0 2px; }
.tool { display: flex; flex-direction: column; align-items: center; white-space: nowrap; }
.tool svg { width: 50px; height: 50px; margin: 0 0 1px; }
.drop { width: 10px; display: grid; place-items: center; color: #bbb; }
.drop svg { width: 10px; height: 6px; }
.tg-compile { padding: 0 21px 0 10px; gap: 23px; }
.tg-file { padding: 0 19px 0 15px; gap: 17px; }
.tg-find { padding: 0 20px 0 17px; gap: 20px; }
.tg-find .drop { margin-left: 3px; }
.tg-class { padding: 0 22px 0 24px; gap: 24px; }
.tg-play { border: 0; padding: 0 13px 0 18px; gap: 19px; }
.debug { width: 207px; text-align: center; text-shadow: none; padding-top: 21px; }
.debug label { display: block; }
.debug-pick { position: relative; height: 28px; background: #d9d9d9; border: 1px solid #eee; color: #0c0c0c; margin-bottom: 1px; font-size: 16px; }
.debug-pick select { width: 100%; height: 100%; padding-left: 5px; }
.debug-pick svg { position: absolute; right: 8px; top: 10px; width: 10px; height: 6px; pointer-events: none; }

.editor-tabs { display: flex; gap: 2px; margin-top: 6px; padding-left: 5px; }
.editor-tabs .tab { margin: 0; width: 187px; background: #2f2f2f; }
.editor-tabs .tab-on { background: #484848; border-top: 2px solid #a58f2a; padding-bottom: 4px; }
.tab-on > svg { height: 18px; }
.tab-fn > svg { color: #b9c7ea; }

/* Graph canvas */
.canvas {
  position: relative; flex: 1; min-height: 663px; overflow: hidden; border: 3px solid #454545; border-top-width: 2px; background-color: #262626;
  background-image:
    linear-gradient(90deg, #000, #000),
    linear-gradient(90deg, #141414 1px, transparent 1px), linear-gradient(#141414 1px, transparent 1px),
    linear-gradient(90deg, #343434 1px, transparent 1px), linear-gradient(#343434 1px, transparent 1px);
  background-size: 1px 100%, 120px 120px, 120px 120px, 15px 15px, 15px 15px;
  background-position: 209px 0, 89px 0, 0 71px, 14px 0, 0 11px;
  background-repeat: no-repeat, repeat, repeat, repeat, repeat;
}
.canvas::after { content: ""; position: absolute; inset: 0; box-shadow: inset 0 0 50px rgba(0, 0, 0, .5); pointer-events: none; }
.watermark { position: absolute; right: 12px; bottom: 22px; font-size: 70px; line-height: 80px; font-weight: 700; color: rgba(255, 255, 255, .18); }
.wires { position: absolute; left: 0; top: 0; width: 100%; height: 100%; }

.node {
  position: absolute; padding-bottom: 2px; border-radius: 6px; background: rgba(11, 14, 11, .86);
  box-shadow: 0 0 0 1px #0a0a0a, 0 2px 4px rgba(0, 0, 0, .6); font-size: 11px; line-height: 14px; color: #e6e6e6;
}
.node-head { display: flex; align-items: center; height: 22px; gap: 5px; padding: 0 4px 0 10px; border-radius: 6px 6px 0 0; border-top: 1px solid rgba(255, 255, 255, .35); font-size: 13px; }
.node-head h4 { font-weight: 700; text-shadow: 1px 1px 1px rgba(0, 0, 0, .7); }
.red { background: linear-gradient(90deg, #94191d, #7e1619 50%, #3a1415); }
.blue-head { background: linear-gradient(90deg, #3d6a8d, #37617f 60%, #2c3942); padding-left: 11px; }
.green-head { height: 37px; align-items: flex-start; padding: 4px 4px 0 11px; background: linear-gradient(90deg, #5a8655, #4a6e47 50%, #243024); }
.green-head em { display: block; font-size: 12px; line-height: 18px; color: #8aa17d; }
.green-head .fn { color: #9ce88f; }
.dia { width: 13px; height: 14px; }
.fn { width: 12px; height: 16px; color: #7cc4f5; }
.spawn { width: 14px; height: 14px; }
.square { width: 11px; height: 11px; margin-left: auto; border: 3px solid #f5333c; border-radius: 2px; background: #240506; }
.row { display: flex; align-items: center; height: 24px; padding: 0 11px; gap: 4px; white-space: nowrap; }
.end { justify-content: flex-end; }
.exec-row { height: 29px; padding: 2px 10px 0; }
.row-28 { height: 28px; }
.first { margin-top: 4px; }
.push { margin-left: auto; }
.exec { width: 12px; height: 14px; }
.full { --fill: #fff; }
.pin { width: 14px; height: 12px; }
.solid { --fill: currentColor; }
.blue { color: #0a9ae2; }
.green-pin { color: #7cc62e; }
.gold { color: #ddab1b; }
.gold.solid { color: #fcc21c; }
.lilac { color: #99a4f8; }
.violet { color: #4c16a8; }
.jade { color: #13614f; }
.num { width: 24px; height: 17px; margin-left: 2px; border: 1px solid #ccc; border-radius: 2px; text-align: center; }

.node-overlap { left: 211px; top: 28px; width: 204px; background: rgba(14, 17, 14, .75); color: #a5a5a5; }
.node-overlap .node-head { background: #47100f; border: 0; color: #aaa; }
.node-overlap .exec { opacity: .8; }
.node-overlap .pin { opacity: .75; }
.node-tick { left: 211px; top: 223px; width: 119px; }
.node-delay { left: 406px; top: 223px; width: 202px; }
.node-arrow { left: 242px; top: 403px; width: 121px; height: 30px; padding: 0 13px; display: flex; align-items: center; justify-content: flex-end; gap: 4px; border-radius: 12px; background: radial-gradient(ellipse at 40% 0, #25618a, rgba(32, 52, 63, .9) 45%, rgba(22, 26, 26, .9) 75%); border-top: 1px solid #889; }
.node-world { left: 406px; top: 373px; width: 229px; }
.node-spawn { left: 722px; top: 223px; width: 308px; height: 276px; }
.node-spawn::before { content: ""; position: absolute; inset: -4px -5px -5px -4px; border-radius: 9px; padding: 4px; background: linear-gradient(#e3ac1e, #c86c0a); mask: linear-gradient(#000, #000) content-box exclude, linear-gradient(#000, #000); pointer-events: none; }
.node-spawn .row { padding-left: 10px; padding-right: 8px; }
.node-spawn .node-head { gap: 4px; padding-left: 10px; }
.clock { position: absolute; right: -9px; top: -10px; width: 22px; height: 22px; }
.row-top { align-items: flex-start; height: 41px; padding-top: 5px; }
.row-top .mid { margin-top: 11px; }
.field { display: flex; flex-direction: column; }
.class-pick { display: flex; align-items: center; gap: 4px; height: 17px; padding-left: 7px; color: #888; }
.ghost, .pick { position: relative; background: #232523; border-radius: 2px; }
.ghost { width: 87px; height: 17px; }
.ghost select { display: block; width: 100%; height: 100%; padding-left: 1px; }
.ghost svg { position: absolute; right: 2px; top: 6px; width: 7px; height: 5px; pointer-events: none; }
.class-pick button { color: #444; }
.class-pick button svg { width: 11px; height: 11px; }
.row-rotation { height: 25px; }
.row-scale { height: 45px; }
.vec { display: flex; gap: 3px; padding: 2px 0 0 7px; }
.vec label { display: flex; align-items: center; width: 41px; height: 18px; padding: 0 3px; border: 1px solid #aaa; border-radius: 1px; color: #777; font-size: 12px; }
.vec input { width: 100%; min-width: 0; text-align: right; color: #eee; }
.row-collide { height: 47px; padding-top: 7px; }
.pick { width: 159px; height: 19px; margin: 1px 0 0 6px; background: linear-gradient(#dedede, #adadad); color: #111; }
.pick select { display: block; width: 100%; height: 100%; padding-left: 4px; }
.pick svg { position: absolute; right: 5px; top: 7px; width: 8px; height: 5px; pointer-events: none; }
.expand { display: block; margin: 5px auto 0; color: #ddd; }
.expand svg { width: 11px; height: 8px; }

.hint { position: absolute; z-index: 2; left: 210px; top: 0; width: 372px; height: 16px; overflow: hidden; background: #3c3c3c; border-radius: 0 0 4px 4px; color: #0d0d0d; font-size: 17px; line-height: 20px; }
.hint span { display: block; margin: -9px 12px 0; }
.crumbs { position: absolute; inset: 0 0 auto; z-index: 1; display: flex; align-items: center; height: 52px; padding: 0 9px; background: rgba(0, 0, 0, .55); color: #a5a5a5; font-size: 24px; line-height: 28px; }
.crumbs > * { flex: none; }
.crumbs hr { width: 1px; height: 43px; margin: 0; border: 0; background: #aaa; }
.star { width: 26px; height: 26px; margin-right: 6px; }
.nav-arrow { width: 22px; height: 28px; }
.crumbs hr + button .nav-arrow { margin: 0 30px 0 15px; }
.dim { color: #888; margin-right: 19px; }
.crumb-graph { width: 30px; height: 26px; margin: 0 17px 0 14px; }
.chev { width: 10px; height: 20px; margin: 0 12px 0 9px; }
.crumbs strong { margin-left: auto; font-size: 24px; color: #333; padding-bottom: 8px; margin-right: -2px; }

/* Compiler results */
.results { margin-top: 7px; }
.results-body { height: 145px; padding: 7px 8px 0; background: #3e3e3e; }
.log { display: flex; align-items: flex-start; gap: 14px; height: 91px; padding: 5px 12px; background: #222; color: #999; border-radius: 2px; }
.log i { width: 6px; height: 6px; margin-top: 7px; border-radius: 50%; background: #8cc3ea; border: 1px solid #1d5c86; }
.log code { font: 15px/20px "DejaVu Sans Mono", "Liberation Mono", monospace; }
.clear { display: block; margin: 12px 7px 0 auto; }

.details { display: flex; flex-direction: column; }

/* Windows taskbar */
.taskbar { position: relative; display: flex; align-items: center; justify-content: center; height: 60px; background: linear-gradient(90deg, #2f4b47, #2d4a46 45%, #375046 62%, #2a4c47 72%, #3a5149 84%, #2b4d48 90%, #2a4844); }
.apps { display: flex; gap: 25px; margin-right: -3px; }
.apps button { position: relative; height: 30px; }
.apps svg { width: 30px; height: 30px; }
.running::after { content: ""; position: absolute; left: 11px; bottom: -9px; width: 8px; height: 4px; border-radius: 2px; background: #a3b0ad; }
.ue-mini { color: #fff; }
.tray { position: absolute; right: 21px; top: 10px; display: flex; align-items: center; gap: 12px; height: 40px; color: #fff; }
.t-chev { width: 16px; height: 9px; }
.t-ico { width: 20px; height: 20px; }
.tray time { font: 14px/20px "Noto Sans", sans-serif; text-align: right; margin-left: 7px; }
.tray b { width: 20px; height: 20px; border-radius: 50%; background: #a2bab5; color: #223; font: 13px/20px "Noto Sans", sans-serif; text-align: center; margin-left: -2px; }
```
